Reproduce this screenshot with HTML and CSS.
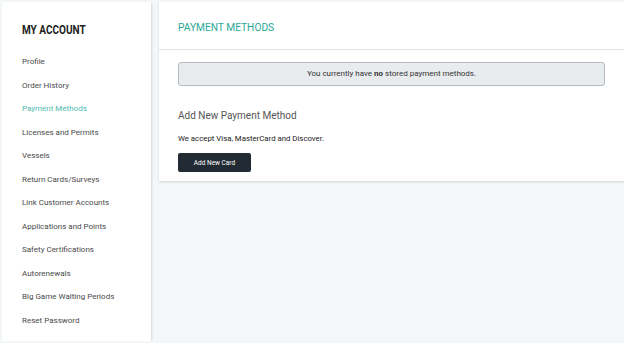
FILE: index.html
```html
<!DOCTYPE html>
<html>
<head>
  <meta name="viewport" content="width=device-width, initial-scale=1">
  <title>My Account - Payment Methods</title>
  <link rel="stylesheet" href="styles.css">
</head>
<body>
  <div class="layout">
    <div class="sidebar">
      <h2 class="sidebar-title">MY ACCOUNT</h2>
      <ul class="nav">
        <li><a href="#">Profile</a></li>
        <li><a href="#">Order History</a></li>
        <li><a href="#" class="active">Payment Methods</a></li>
        <li><a href="#">Licenses and Permits</a></li>
        <li><a href="#">Vessels</a></li>
        <li><a href="#">Return Cards/Surveys</a></li>
        <li><a href="#">Link Customer Accounts</a></li>
        <li><a href="#">Applications and Points</a></li>
        <li><a href="#">Safety Certifications</a></li>
        <li><a href="#">Autorenewals</a></li>
        <li><a href="#">Big Game Waiting Periods</a></li>
        <li><a href="#">Reset Password</a></li>
      </ul>
    </div>

    <div class="main">
      <div class="card">
        <div class="card-header">
          <h3>PAYMENT METHODS</h3>
        </div>
        <div class="card-body">
          <div class="notice">You currently have <b>no</b> stored payment methods.</div>
          <h4 class="section-title">Add New Payment Method</h4>
          <p class="accepted">We accept Visa, MasterCard and Discover.</p>
          <button class="btn-dark">Add New Card</button>
        </div>
      </div>
    </div>
  </div>
</body>
</html>
```

FILE: styles.css
```css
body {
  margin: 0;
  font-family: Roboto, "Liberation Sans", sans-serif;
  background: #f3f7f7;
  color: #333;
}

.layout {
  display: flex;
  align-items: flex-start;
  gap: 8px;
  padding: 2px 0 0 2px;
}

.sidebar {
  width: 129px;
  height: 339px;
  background: white;
  padding: 0 0 0 20px;
  box-shadow: 1px 1px 2px rgba(0,0,0,0.12);
}

/* condensed heading look */
.sidebar-title {
  margin: 20px 0 0;
  font-size: 12.5px;
  font-weight: 700;
  color: #222;
  line-height: 15px;
  transform: scaleX(0.8);
  transform-origin: left center;
}

.nav {
  list-style: none;
  margin: 16px 0 0;
  padding: 0;
}

.nav li {
  height: 23.5px;
  line-height: 12px;
}

.nav a {
  font-size: 8px;
  color: #4a4a4a;
  text-decoration: none;
}

.nav a.active {
  color: #4fbcae;
}

.main {
  flex: 1;
}

.card {
  background: white;
  box-shadow: 0 1px 2px rgba(0,0,0,0.15);
}

.card-header {
  height: 48px;
  border-bottom: 1px solid #e2e5e7;
  padding: 20px 19px 0;
  box-sizing: border-box;
}

.card-header h3 {
  margin: 0;
  font-size: 10.2px;
  line-height: 12px;
  font-weight: 400;
  color: #2aa897;
}

.card-body {
  padding: 12px 19px 9px;
}

.notice {
  height: 22px;
  line-height: 22px;
  background: #e9ecef;
  border: 1px solid #b4bac0;
  border-radius: 3px;
  text-align: center;
  font-size: 8px;
  color: #333;
}

.section-title {
  margin: 23px 0 0;
  font-size: 10px;
  line-height: 14px;
  font-weight: 400;
  color: #555;
}

.accepted {
  margin: 11px 0 0;
  font-size: 7.8px;
  line-height: 10px;
  color: #222;
}

.btn-dark {
  display: block;
  margin-top: 9px;
  width: 73px;
  height: 19px;
  border: none;
  border-radius: 2px;
  background: #222b33;
  color: white;
  font-family: inherit;
  font-size: 6.5px;
  padding: 0;
}
```
